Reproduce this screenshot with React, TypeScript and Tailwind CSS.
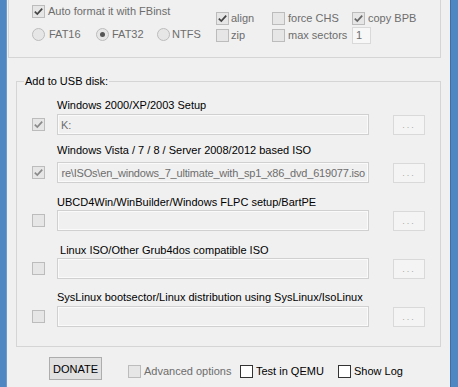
import React from "react";

const FONT = { fontFamily: '"Liberation Sans", Arial, sans-serif' };

const ROWS = [
  { label: "Windows 2000/XP/2003 Setup", value: "K:", checked: true, right: false, labelClass: "mt-0 mb-0" },
  {
    label: "Windows Vista / 7 / 8 / Server 2008/2012 based ISO",
    value: "re\\ISOs\\en_windows_7_ultimate_with_sp1_x86_dvd_619077.iso",
    checked: true,
    right: true,
    labelClass: "-mt-[3px] mb-[3px]",
  },
  { label: "UBCD4Win/WinBuilder/Windows FLPC setup/BartPE", value: "", checked: false, right: false, labelClass: "mt-[1px] -mb-[1px]" },
  { label: " Linux ISO/Other Grub4dos compatible ISO", value: "", checked: false, right: false, labelClass: "mt-[1px] -mb-[1px] pl-[1px]" },
  { label: "SysLinux bootsector/Linux distribution using SysLinux/IsoLinux", value: "", checked: false, right: false, labelClass: "mt-0 mb-0" },
];

function Check({ checked = false, enabled = false, mark = "#5a5a5a" }: { checked?: boolean; enabled?: boolean; mark?: string }) {
  return (
    <span
      className={
        enabled
          ? "w-[13px] h-[13px] shrink-0 border border-[#333333] bg-white flex items-center justify-center"
          : "w-[13px] h-[13px] shrink-0 border border-[#bcbcbc] bg-[#e6e6e6] flex items-center justify-center"
      }
    >
      {checked && (
        <svg width="11" height="11" viewBox="0 0 11 11">
          <path d="M1.8 5.6 L4.3 8.1 L9.2 2.6" fill="none" stroke={mark} strokeWidth="1.7" />
        </svg>
      )}
    </span>
  );
}

function Radio({ on = false }: { on?: boolean }) {
  return (
    <span className="w-[13px] h-[13px] shrink-0 rounded-full border border-[#bcbcbc] bg-[#e6e6e6] flex items-center justify-center">
      {on && <span className="w-[5px] h-[5px] rounded-full bg-[#555555]" />}
    </span>
  );
}

export default function App() {
  return (
    <div className="flex w-[458px] h-[387px] bg-[#f0f0f0] overflow-hidden text-[11px] leading-[14px] text-black" style={FONT}>
      <div className="w-[7px] bg-[#4f87c2] border-r border-[#6a9bcf]" />

      <div className="flex-1 flex flex-col">
        {/* format options group, top edge scrolled out of view */}
        <div className="ml-[1px] w-[433px] h-[58px] border-x border-b border-[#d5d5d5] flex text-[#6d6d6d]">
          <div className="w-[207px] pl-[23px] pt-[4px] flex flex-col">
            <div className="h-[14px] flex items-center gap-[3px]">
              <Check checked mark="#444444" />
              <span>Auto format it with FBinst</span>
            </div>
            <div className="h-[14px] mt-[9px] flex items-center">
              <div className="w-[64px] flex items-center gap-[4px]">
                <Radio />
                <span>FAT16</span>
              </div>
              <div className="w-[61px] flex items-center gap-[3px]">
                <Radio on />
                <span>FAT32</span>
              </div>
              <div className="flex items-center gap-[2px]">
                <Radio />
                <span>NTFS</span>
              </div>
            </div>
          </div>
          <div className="pt-[11px] flex flex-col">
            <div className="h-[14px] flex items-center">
              <div className="w-[56px] flex items-center gap-[2px]">
                <Check checked mark="#444444" />
                <span>align</span>
              </div>
              <div className="w-[80px] flex items-center gap-[3px]">
                <Check />
                <span>force CHS</span>
              </div>
              <div className="flex items-center gap-[3px]">
                <Check checked mark="#666666" />
                <span>copy BPB</span>
              </div>
            </div>
            <div className="h-[16px] mt-[2px] flex items-center">
              <div className="w-[56px] flex items-center gap-[2px]">
                <Check />
                <span>zip</span>
              </div>
              <div className="w-[80px] flex items-center gap-[3px]">
                <Check />
                <span>max sectors</span>
              </div>
              <div className="w-[19px] h-[17px] border border-[#d9d9d9] bg-[#f7f7f7] pl-[3px] flex items-center">1</div>
            </div>
          </div>
        </div>

        {/* Add to USB disk */}
        <div className="relative mt-[23px] ml-[9px] w-[425px] h-[266px] border border-[#d5d5d5]">
          <span className="absolute left-[7px] top-[-8px] px-[1px] bg-[#f0f0f0]">Add to USB disk:</span>
          <div className="pt-[16px] flex flex-col">
            {ROWS.map((row) => (
              <div key={row.label} className="h-[48px] flex flex-col">
                <div className={"h-[14px] pl-[40px] whitespace-pre " + row.labelClass}>{row.label}</div>
                <div className="mt-[2px] h-[21px] pl-[15px] flex items-center">
                  <Check checked={row.checked} mark="#8a8a8a" />
                  <div
                    className={
                      row.right
                        ? "ml-[12px] w-[312px] h-[21px] border border-[#d0d0d0] shadow-[inset_0_0_0_1px_#fafafa] bg-[#f0f0f0] px-[3px] flex items-center justify-end overflow-hidden whitespace-nowrap text-[#6d6d6d] tracking-[-0.2px]"
                        : "ml-[12px] w-[312px] h-[21px] border border-[#d0d0d0] shadow-[inset_0_0_0_1px_#fafafa] bg-[#f0f0f0] px-[3px] flex items-center overflow-hidden whitespace-nowrap text-[#6d6d6d]"
                    }
                  >
                    <span className="shrink-0">{row.value}</span>
                  </div>
                  <div className="ml-[24px] w-[32px] h-[20px] border border-[#d9d9d9] bg-[#f4f4f4] flex items-end justify-center pb-[4px] text-[9px] leading-[9px] tracking-[2px] text-[#a8a8a8]">
                    ...
                  </div>
                </div>
              </div>
            ))}
          </div>
        </div>

        {/* bottom actions */}
        <div className="mt-[10px] pl-[42px] flex items-start">
          <button className="w-[53px] h-[23px] border border-[#adadad] bg-[#e1e1e1] text-[11px] leading-[14px] text-black">
            DONATE
          </button>
          <div className="ml-[26px] mt-[7px] w-[112px] h-[14px] flex items-center gap-[3px] text-[#6d6d6d]">
            <Check />
            <span>Advanced options</span>
          </div>
          <div className="mt-[7px] w-[98px] h-[14px] flex items-center gap-[3px]">
            <Check enabled />
            <span>Test in QEMU</span>
          </div>
          <div className="mt-[7px] h-[14px] flex items-center gap-[3px]">
            <Check enabled />
            <span>Show Log</span>
          </div>
        </div>
      </div>

      <div className="w-[8px] bg-[#4f87c2] border-l border-[#3d70a6]" />
    </div>
  );
}
